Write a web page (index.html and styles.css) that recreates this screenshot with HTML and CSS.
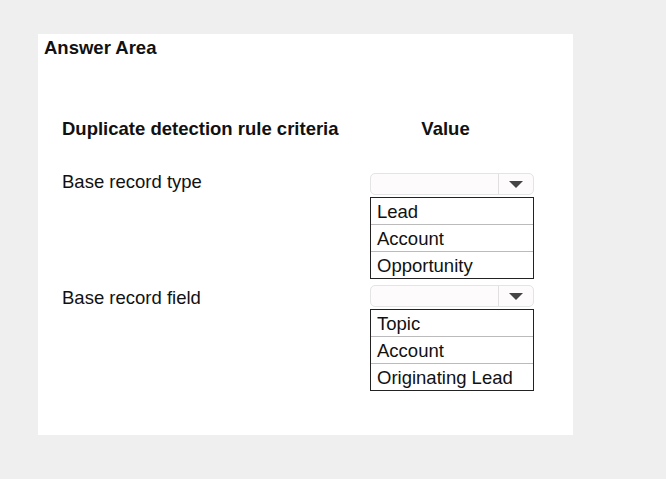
FILE: index.html
```html
<!DOCTYPE html>
<html lang="en">
<head>
<meta charset="UTF-8">
<title>Answer Area</title>
<link rel="stylesheet" href="styles.css">
</head>
<body>

<div class="panel">
  <h2 class="title">Answer Area</h2>

  <div class="table">
    <div class="head-row">
      <div class="col-label">Duplicate detection rule criteria</div>
      <div class="col-value">Value</div>
    </div>

    <div class="row">
      <div class="col-label label">Base record type</div>
      <div class="col-value">
        <div class="select"><span class="select-box"></span><span class="select-arrow"></span></div>
        <ul class="options">
          <li>Lead</li>
          <li>Account</li>
          <li>Opportunity</li>
        </ul>
      </div>
    </div>

    <div class="row">
      <div class="col-label label label-2">Base record field</div>
      <div class="col-value">
        <div class="select"><span class="select-box"></span><span class="select-arrow"></span></div>
        <ul class="options">
          <li>Topic</li>
          <li>Account</li>
          <li>Originating Lead</li>
        </ul>
      </div>
    </div>
  </div>
</div>

</body>
</html>
```

FILE: styles.css
```css
body{
  margin:0;
  background:#efefef;
  font-family:'Liberation Sans', Arial, sans-serif;
  color:#111;
}
.panel{
  background:white;
  margin:34px 0 0 38px;
  width:535px;
  height:401px;
  box-sizing:border-box;
  padding:3px 6px;
}
.title{
  margin:0;
  font-size:18.5px;
  font-weight:bold;
  line-height:21px;
}
.table{padding:60px 0 0 18px;}
.head-row{
  display:flex;
  font-size:18.5px;
  font-weight:bold;
  line-height:22px;
}
.col-label{width:308px;}
.col-value{width:164px;box-sizing:border-box;}
.head-row .col-value{text-align:center;padding-right:13px;}
.row{display:flex;}
.head-row + .row{margin-top:33px;}
.row + .row{margin-top:6px;}
.label{
  font-size:18.5px;
  line-height:22px;
  margin-top:-2px;
}
.label-2{margin-top:2px;}
.select{
  display:flex;
  height:22px;
  border:1px solid #e4e4e4;
  border-radius:5px;
  box-sizing:border-box;
  background:#fdfbfb;
}
.select-box{flex:1;border-right:1px solid #e0e0e0;}
.select-arrow{
  width:34px;
  display:flex;
  align-items:center;
  justify-content:center;
}
.select-arrow::after{
  content:"";
  border-left:7px solid transparent;
  border-right:7px solid transparent;
  border-top:7px solid #444;
  margin-top:1px;
}
.options{
  list-style:none;
  margin:2px 0 0;
  padding:0;
  border:1px solid #222;
}
.options li{
  height:26px;
  line-height:27px;
  padding-left:6px;
  font-size:18.5px;
  border-top:1px solid #bbb;
}
.options li:first-child{border-top:none;}
```
